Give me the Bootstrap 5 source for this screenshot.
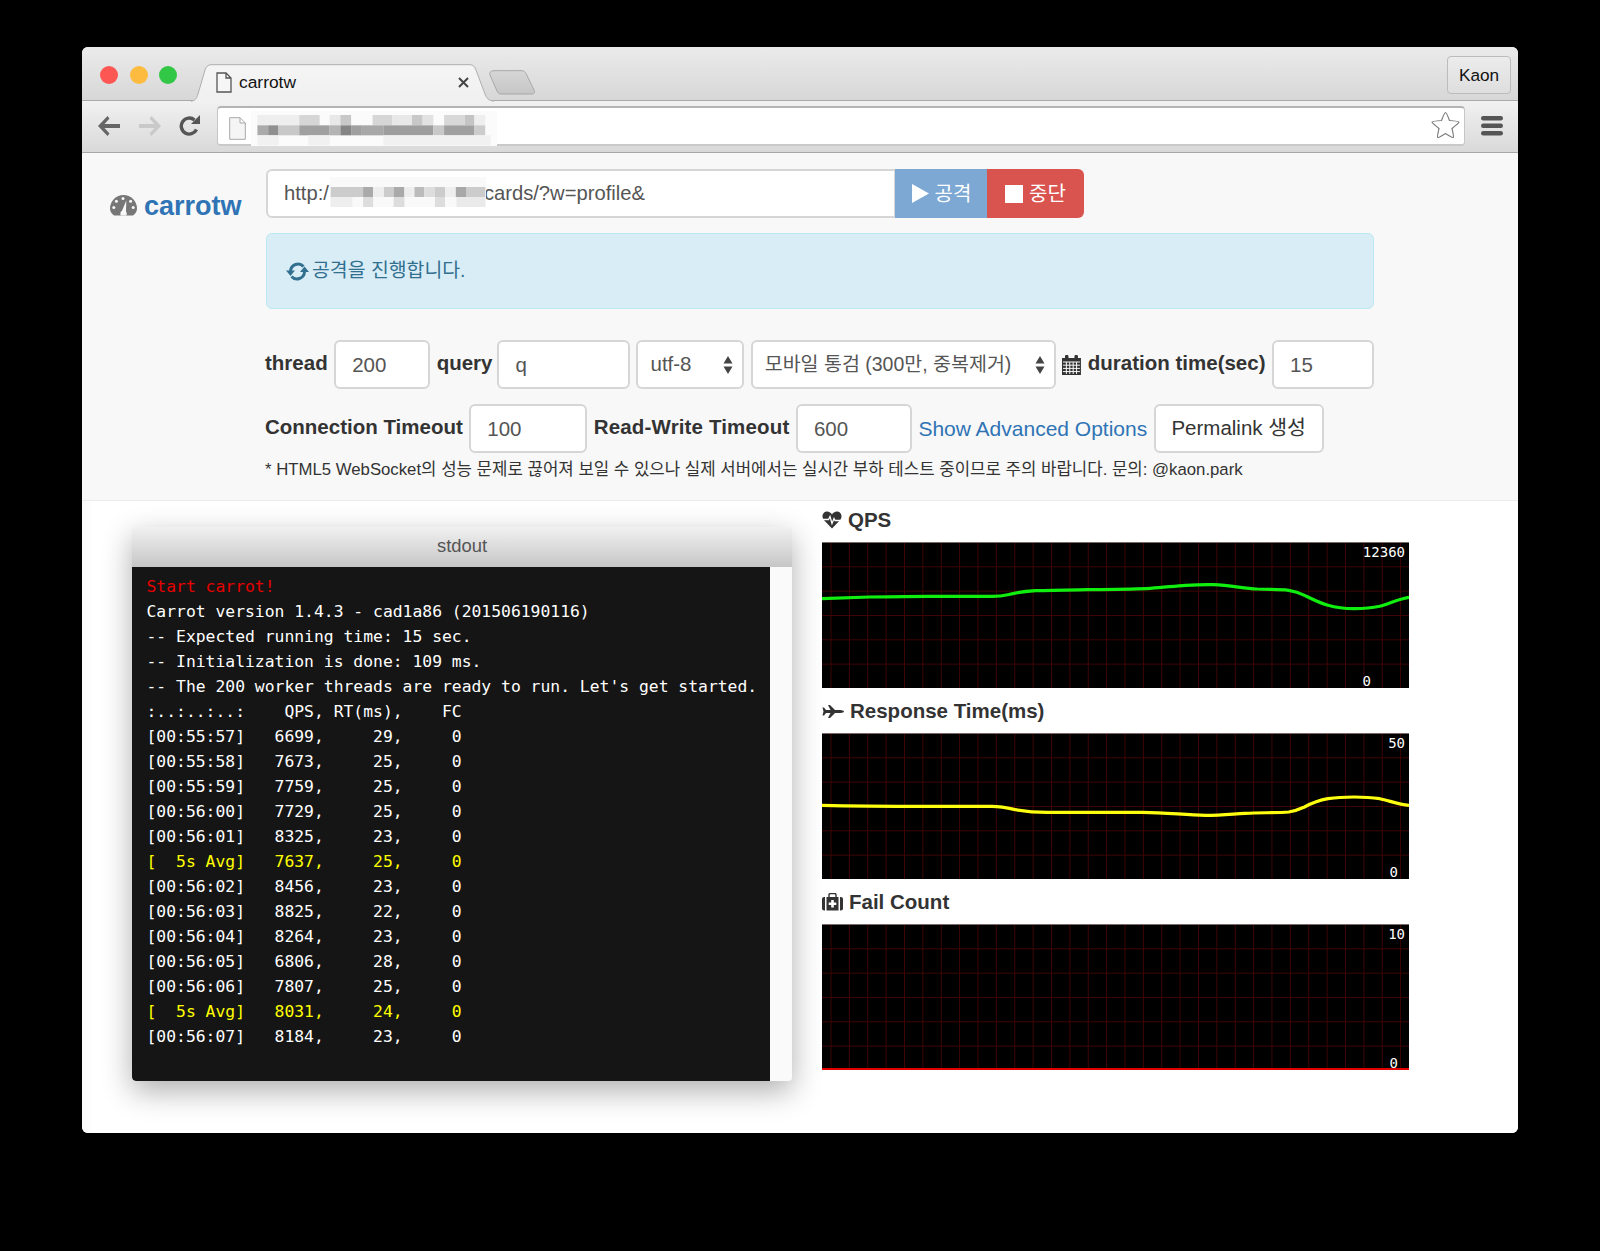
<!DOCTYPE html>
<html lang="ko">
<head>
<meta charset="utf-8">
<title>carrotw</title>
<link href="https://cdn.jsdelivr.net/npm/bootstrap@5.3.0/dist/css/bootstrap.min.css" rel="stylesheet">
<style>
html,body{height:1251px;overflow:hidden}
body{background:#000;padding:47px 0 0 82px;font-family:"Liberation Sans","Noto Sans CJK KR",sans-serif;font-size:20.5px;color:#333}
.shot{width:1436px;height:1086px;background:#fff;border-radius:6px;overflow:hidden}
.tabstrip{height:54px;background:linear-gradient(#ebebeb,#d7d7d7);border-bottom:1px solid #a8a8a8;padding-left:18px}
.dot{width:18px;height:18px;border-radius:50%;margin-top:19px}
.dot-r{background:#fc5753}.dot-y{background:#fdbc40}.dot-g{background:#33c748}
.dots{gap:11.5px}
.tabitem{width:303px;height:37px;margin:17px 0 -1px 13.5px;position:relative;font-size:17.4px;color:#111;padding:5px 0 0 25.5px}
.tabitem>.tabshape{position:absolute;left:0;top:0}
.tabitem>.inner{position:relative;gap:7px}
.tabclose{position:absolute;right:25px;top:13px}
.newtab{margin:23px 0 0 -6px}
.kaon{margin:9px 7px 0 auto;width:64px;height:38px;border:1px solid #bcbcbc;border-radius:4px;background:linear-gradient(#ececec,#dedede);font-size:17.2px;color:#111;line-height:36px;text-align:center}
.toolbar{height:52px;background:linear-gradient(#f1f1f1,#d9d9d9);border-bottom:1px solid #a6a6a6;padding:5px 15px 0 15px}
.navicons{width:120px;gap:17px;padding-top:9px}
.addr{width:1248px;height:40px;background:#fff;border:1px solid #c6c6c6;border-top:2px solid #b4b4b4;border-bottom:2px solid #c9c9c9;border-radius:4px;position:relative;margin-left:0}
.addr-file{margin:7px 0 0 11px}
.addr-blur{position:absolute;left:33px;top:3px;filter:blur(.6px)}
.addr-star{position:absolute;right:4px;top:3px}
.burger{margin:10px 0 0 16px}
.topzone{background:#f8f8f8;height:348px;border-bottom:1px solid #ececec;padding-top:16px}
.brandcol{width:184px;padding:22px 0 0 28px;gap:7px}
.brand{font-size:27px;font-weight:700;color:#2f74b5;line-height:30px;text-decoration:none}
.formcol{width:1108px}
.urlgroup{width:820px;height:49px}
.fc{font-size:20.5px;color:#555;border:2px solid #d6d6d6;border-radius:6px;background-color:#fff;height:49px;padding:0 16px;box-shadow:none}
.urlbox{width:630px;display:flex;align-items:center;position:relative;flex:none;line-height:1;font-size:20.2px}
.urlmask{width:155px;flex:none}
.urlblur{position:absolute;left:62px;top:6px;filter:blur(.6px)}
.btnact{font-size:20px;color:#fff;border:0;height:49px;display:flex;align-items:center;gap:6px;justify-content:center;padding:0}
.btnact.go{width:93px;background:#7ca8d3;border-radius:0}
.btnact.halt{width:97px;background:#d9534f;border-radius:0 6px 6px 0}
.urlgroup .fc{border-radius:6px 0 0 6px}
.notice{margin:15px 0 0;height:76px;background:#d9edf7;border:1px solid #bce8f1;border-radius:6px;color:#31708f;padding:0 19px;gap:3px;font-size:19.4px;width:1108px}
.frow{gap:6.5px;height:49px;margin-left:-1px}
.frow1{margin-top:31px}
.frow2{margin-top:15px}
.lab{font-weight:700;color:#333;white-space:nowrap;margin:0 0 2px}
.lab.wide{letter-spacing:.15px}
.fc.wa{width:96px}.fc.wb{width:132.5px;margin-left:-1.5px}.fc.wc{width:108px;padding-left:12px}.fc.wd{width:306px;padding-left:12px;font-size:19.5px}.fc.we{width:102px}
.fc.wf{width:118px}.fc.wg{width:116px}
.fc.selx{background-image:url("data:image/svg+xml,%3csvg xmlns='http://www.w3.org/2000/svg' viewBox='0 0 10 20'%3e%3cpath fill='%23444' d='M5 1l4.5 7.5h-9zM5 19l4.500-7.500h-9z'/%3e%3c/svg%3e");background-size:10px 20px;background-position:right 9px center;background-repeat:no-repeat}
.lnk{color:#2f74b5;text-decoration:none;white-space:nowrap;font-size:21px}
.permabtn{width:170px;height:49px;font-size:20.5px;color:#333;background:#fff;border:2px solid #d6d6d6;border-radius:6px;padding:0;white-space:nowrap}
.permabtn:hover{background:#fff}
.footnote{font-size:16.75px;color:#333;margin:4px 0 0 -1px;line-height:26px;white-space:nowrap}
.lowzone{height:632px;background:linear-gradient(90deg,#fafafa,#fff 12px)}
.termwrap{width:660px;height:554px;margin:26px 0 0 50px;border-radius:4px;box-shadow:0 10px 30px rgba(0,0,0,.32);background:#fafafa;overflow:hidden}
.termhead{height:40px;background:linear-gradient(#f1f1f1,#c6c6c6);text-align:center;font-size:18.4px;line-height:38px;color:#555}
.termbody{width:638px;height:514px;background:#151515;padding:6.5px 0 0 14.5px;margin:0;font-family:"DejaVu Sans Mono",monospace;font-size:16.38px;line-height:25px;color:#fff;overflow:hidden;border-radius:0 0 0 4px}
.c-red{color:#e60000}.c-yel{color:#ff0}
.chartcol{width:587px;margin:-1px 0 0 30px;gap:3px}
.chartcap{height:42px;font-weight:700;gap:6px;color:#333;padding-bottom:2px}
.scope{height:146px;position:relative;background-color:#000;background-image:linear-gradient(to right,#3f0505 1px,transparent 1px),linear-gradient(to bottom,#3f0505 1px,transparent 1px);background-size:18.38px 100%,100% 24.33px;background-position:8.5px 0,0 -1px;border-top:1px solid #7a6a6a}
.scope svg{position:absolute;left:0;top:-1px}
.scale{position:absolute;right:4px;font-family:"DejaVu Sans Mono",monospace;font-size:14px;line-height:16px;color:#fff}
.scale.top{top:1px}.scale.bot{bottom:-1px;right:11px}
.scale.bot.botq{right:38px}
.flat{position:absolute;left:0;right:0;bottom:0;height:2px;background:#e00000}
</style>
</head>
<body>
<div class="shot">
  <div class="tabstrip d-flex">
    <div class="dots d-flex"><div class="dot dot-r"></div><div class="dot dot-y"></div><div class="dot dot-g"></div></div>
    <div class="tabitem">
      <svg class="tabshape" width="303" height="38" viewBox="0 0 303 38"><defs><linearGradient id="tg" x1="0" y1="0" x2="0" y2="1"><stop offset="0" stop-color="#f5f5f5"/><stop offset="1" stop-color="#f0f0f0"/></linearGradient></defs><path d="M0 38V37C5 37 6 33 7 30L14 6C15 3 17 .7 20 .7H279C282 .7 284 3 285 6L294 30C295 33 297 37 303 37V38" fill="url(#tg)" stroke="#aeaeae"/></svg>
      <div class="inner d-flex align-items-center">
        <svg width="16" height="21" viewBox="0 0 16 21"><path d="M1 1H10L15 6V20H1Z M10 1V6H15" fill="#f6f6f6" stroke="#555" stroke-width="1.3"/></svg>
        <span>carrotw</span>
      </div>
      <svg class="tabclose" width="11" height="11" viewBox="0 0 11 11"><path d="M1 1L10 10M10 1L1 10" stroke="#444" stroke-width="2"/></svg>
    </div>
    <svg class="newtab" width="48" height="25" viewBox="0 0 48 25"><defs><linearGradient id="ng" x1="0" y1="0" x2="0" y2="1"><stop offset="0" stop-color="#d6d6d6"/><stop offset="1" stop-color="#c6c6c6"/></linearGradient></defs><path d="M6 .7H34C36 .7 37 2 38 3.500L46 20C47 22 46.500 24 44 24H13C11 24 10 23 9 21L2 5C1 3 2.500 .7 6 .7Z" fill="url(#ng)" stroke="#a8a8a8"/></svg>
    <div class="kaon">Kaon</div>
  </div>
  <div class="toolbar d-flex">
    <div class="navicons d-flex">
      <svg width="24" height="22" viewBox="0 0 24 22"><path d="M10.500 1L1 11L10.500 21L12.500 18.500L7.500 13H23V9H7.500L12.500 3.500Z" fill="#666"/></svg>
      <svg width="24" height="22" viewBox="0 0 24 22"><path d="M13.500 1L23 11L13.500 21L11.500 18.500L16.500 13H1V9H16.500L11.500 3.500Z" fill="#c9c9c9"/></svg>
      <svg width="22" height="21" viewBox="0 0 22 21"><path d="M17.500 14.500A8 8 0 1 1 15.500 5" fill="none" stroke="#555" stroke-width="3.400"/><path d="M12 9H21V0Z" fill="#555"/></svg>
    </div>
    <div class="addr">
      <svg class="addr-file" width="17" height="23" viewBox="0 0 17 23"><path d="M.7.7H11L16.300 6V22.300H.7Z M11 .7V6H16.300" fill="#f5f5f5" stroke="#a8a8a8"/></svg>
      <svg class="addr-blur" width="246" height="35" viewBox="480 210 688 105" preserveAspectRatio="none"><rect x="480" y="210" width="688" height="105" fill="#fbfbfb"/><g><rect x="498" y="222" width="117" height="31" fill="#eee"/><rect x="615" y="222" width="57" height="31" fill="#d6d6d6"/><rect x="700" y="222" width="30" height="31" fill="#e8e8e8"/><rect x="730" y="222" width="30" height="31" fill="#c8c8c8"/><rect x="820" y="222" width="55" height="31" fill="#d6d6d6"/><rect x="875" y="222" width="55" height="31" fill="#e8e8e8"/><rect x="930" y="222" width="30" height="31" fill="#c8c8c8"/><rect x="960" y="222" width="30" height="31" fill="#e2e2e2"/><rect x="1020" y="222" width="58" height="31" fill="#d8d8d8"/><rect x="1078" y="222" width="27" height="31" fill="#c4c4c4"/><rect x="1105" y="222" width="30" height="31" fill="#eee"/></g><g><rect x="498" y="253" width="30" height="30" fill="#aaa"/><rect x="528" y="253" width="29" height="30" fill="#8f8f8f"/><rect x="557" y="253" width="58" height="30" fill="#c8c8c8"/><rect x="615" y="253" width="85" height="30" fill="#a0a0a0"/><rect x="700" y="253" width="30" height="30" fill="#b4b4b4"/><rect x="730" y="253" width="30" height="30" fill="#858585"/><rect x="760" y="253" width="30" height="30" fill="#a0a0a0"/><rect x="790" y="253" width="60" height="30" fill="#a8a8a8"/><rect x="850" y="253" width="140" height="30" fill="#9e9e9e"/><rect x="990" y="253" width="30" height="30" fill="#c8c8c8"/><rect x="1020" y="253" width="85" height="30" fill="#a0a0a0"/><rect x="1105" y="253" width="30" height="30" fill="#ccc"/></g><g fill="#f1f1f1"><rect x="498" y="283" width="60" height="30"/><rect x="640" y="283" width="60" height="30"/><rect x="850" y="283" width="300" height="30"/></g></svg>
      <svg class="addr-star" width="29" height="28" viewBox="0 0 29 28"><path d="M14.500 1.500C15.500 1.500 16 3 18.500 9.500C25 10 28 10.300 28 11.200C28 12 24 14.800 21 17.500C22 22 23 26 22.300 26.500C21.500 27 18 24.500 14.500 22.500C11 24.500 7.500 27 6.700 26.500C6 26 7 22 8 17.500C5 14.800 1 12 1 11.200C1 10.300 4 10 10.500 9.500C13 3 13.500 1.500 14.500 1.500Z" fill="#fff" stroke="#7d7d7d" stroke-width="1.200"/></svg>
    </div>
    <svg class="burger" width="22" height="20" viewBox="0 0 22 20"><g fill="#555"><rect width="22" height="4.500" rx="2.200"/><rect y="7.500" width="22" height="4.500" rx="2.200"/><rect y="15" width="22" height="4.500" rx="2.200"/></g></svg>
  </div>
  <div class="topzone d-flex">
    <div class="brandcol d-flex align-items-start">
      <svg width="27" height="21" viewBox="0 0 27 21" class="mt-1"><path d="M4 20.500C1.500 18.500 0 16.500 0 13.500A13.500 13.500 0 0 1 27 13.500C27 16.500 25.500 18.500 23 20.500Z" fill="#777"/><g fill="#f8f8f8"><circle cx="13" cy="3.400" r="1.500"/><circle cx="6.400" cy="6.300" r="1.500"/><circle cx="20.600" cy="6.300" r="1.500"/><circle cx="3.800" cy="12.500" r="1.500"/><circle cx="23.200" cy="12.500" r="1.500"/><path d="M16.300 5.500L16 16.500C17 18 17 19.500 16.300 20.500H10.700C10 18.500 10.500 16.500 12 15.800Z"/></g></svg>
      <a class="brand" href="#">carrotw</a>
    </div>
    <div class="formcol">
      <div class="input-group urlgroup flex-nowrap">
        <div class="fc urlbox"><span>http:/</span><span class="urlmask"></span><span>cards/?w=profile&amp;</span>
          <svg class="urlblur" width="156" height="30" viewBox="698 410 434 90" preserveAspectRatio="none"><rect x="698" y="410" width="434" height="90" fill="#f9f9f9"/><g><rect x="700" y="440" width="90" height="30" fill="#ccc"/><rect x="790" y="440" width="28" height="30" fill="#aaa"/><rect x="818" y="440" width="30" height="30" fill="#eee"/><rect x="848" y="440" width="27" height="30" fill="#ccc"/><rect x="875" y="440" width="30" height="30" fill="#aaa"/><rect x="905" y="440" width="28" height="30" fill="#eee"/><rect x="933" y="440" width="27" height="30" fill="#bbb"/><rect x="960" y="440" width="30" height="30" fill="#ddd"/><rect x="990" y="440" width="28" height="30" fill="#ccc"/><rect x="1018" y="440" width="30" height="30" fill="#eee"/><rect x="1048" y="440" width="30" height="30" fill="#a8a8a8"/><rect x="1078" y="440" width="52" height="30" fill="#ccc"/></g><g fill="#ddd"><rect x="790" y="470" width="28" height="30"/><rect x="875" y="470" width="30" height="30"/><rect x="990" y="470" width="28" height="30"/><rect x="700" y="470" width="60" height="30" fill="#eee"/><rect x="1050" y="470" width="80" height="30" fill="#eaeaea"/></g></svg>
        </div>
        <button type="button" class="btn btnact go"><svg width="17" height="19" viewBox="0 0 17 19"><path d="M0 0L17 9.500L0 19Z" fill="#fff"/></svg>공격</button>
        <button type="button" class="btn btnact halt"><svg width="18" height="18" viewBox="0 0 18 18"><rect width="18" height="18" fill="#fff"/></svg>중단</button>
      </div>
      <div class="alert notice d-flex align-items-center" role="alert">
        <svg width="23" height="19" viewBox="0 0 23 19"><g fill="none" stroke="#31708f" stroke-width="3"><path d="M4.500 9A7.500 7.500 0 0 1 17.500 4.500"/><path d="M18.500 10A7.500 7.500 0 0 1 5.500 14.500"/></g><g fill="#31708f"><path d="M0 8.500H9L4.500 14Z"/><path d="M14 10H23L18.500 4.500Z"/></g></svg>
        <span>공격을 진행합니다.</span>
      </div>
      <div class="frow frow1 d-flex align-items-center">
        <label class="lab">thread</label>
        <input class="form-control fc wa" value="200">
        <label class="lab">query</label>
        <input class="form-control fc wb" value="q">
        <select class="form-select fc wc selx"><option>utf-8</option></select>
        <select class="form-select fc wd selx"><option>모바일 통검 (300만, 중복제거)</option></select>
        <svg width="19" height="20" viewBox="0 0 19 20"><path d="M0 3H3V1.500A1.500 1.500 0 0 1 6.500 1.500V3H12.500V1.500A1.500 1.500 0 0 1 16 1.500V3H19V20H0Z" fill="#333"/><g stroke="#f8f8f8" stroke-width="1"><path d="M1 7H18M1 10.200H18M1 13.400H18M1 16.600H18M4.400 7V19M7.800 7V19M11.200 7V19M14.600 7V19"/></g></svg>
        <label class="lab">duration time(sec)</label>
        <input class="form-control fc we" value="15">
      </div>
      <div class="frow frow2 d-flex align-items-center">
        <label class="lab">Connection Timeout</label>
        <input class="form-control fc wf" value="100">
        <label class="lab wide">Read-Write Timeout</label>
        <input class="form-control fc wg" value="600">
        <a class="lnk" href="#">Show Advanced Options</a>
        <button type="button" class="btn permabtn">Permalink 생성</button>
      </div>
      <p class="footnote">* HTML5 WebSocket의 성능 문제로 끊어져 보일 수 있으나 실제 서버에서는 실시간 부하 테스트 중이므로 주의 바랍니다. 문의: @kaon.park</p>
    </div>
  </div>
  <div class="lowzone d-flex align-items-start">
    <div class="termwrap">
      <div class="termhead">stdout</div>
<pre class="termbody"><span class="c-red">Start carrot!</span>
Carrot version 1.4.3 - cad1a86 (201506190116)
-- Expected running time: 15 sec.
-- Initialization is done: 109 ms.
-- The 200 worker threads are ready to run. Let's get started.
:..:..:..:    QPS, RT(ms),    FC
[00:55:57]   6699,     29,     0
[00:55:58]   7673,     25,     0
[00:55:59]   7759,     25,     0
[00:56:00]   7729,     25,     0
[00:56:01]   8325,     23,     0
<span class="c-yel">[  5s Avg]   7637,     25,     0</span>
[00:56:02]   8456,     23,     0
[00:56:03]   8825,     22,     0
[00:56:04]   8264,     23,     0
[00:56:05]   6806,     28,     0
[00:56:06]   7807,     25,     0
<span class="c-yel">[  5s Avg]   8031,     24,     0</span>
[00:56:07]   8184,     23,     0</pre>
    </div>
    <div class="chartcol d-flex flex-column">
      <section>
        <div class="chartcap d-flex align-items-center">
          <svg width="20" height="18" viewBox="0 0 20 18"><path d="M10 17.500L1.800 9C-1 5.500 1 .6 5 .6C7.300 .6 9 2 10 3.500C11 2 12.700 .6 15 .6C19 .6 21 5.500 18.200 9Z" fill="#333"/><path d="M0 8.500H6.500L8 5.500L10 12.500L12 7.500L13 9.500H20" fill="none" stroke="#fff" stroke-width="1.300"/></svg>
          <span>QPS</span>
        </div>
        <div class="scope">
          <svg width="587" height="146" viewBox="0 0 587 146"><path d="M0 56.700C20 56 35 55.400 47.400 55C70 54.600 90 54.300 106.800 54.300H169.900C178 54.300 182 53.600 185.800 52.700C195 50.500 205 49.200 213.500 48.700C230 48 248 47.900 265 47.700C285 47.400 310 47.300 328.400 46.300C342 45.500 352 44 363.900 43.300C375 42.700 385 42.600 391.600 42.700C408 43.500 420 45.900 435 47C448 47.600 458 47.300 466.700 48.300C473 49.200 478 51 482.500 53.300C490 57 497 60.700 506 63.300C515 66 523 66.700 532 66.700C541 66.700 550 66 557.700 64.300C567 61.800 576 57 587 55.300" fill="none" stroke="#10ee10" stroke-width="3.200"/></svg>
          <span class="scale top">12360</span><span class="scale bot botq">0</span>
        </div>
      </section>
      <section>
        <div class="chartcap d-flex align-items-center">
          <svg width="22" height="13" viewBox="0 0 22 13"><path d="M22 6.500C22 5.500 19 5 17 5H13L8 0H6L8.500 5H4L2 2.500H.5L1.500 6.500L.5 10.500H2L4 8H8.500L6 13H8L13 8H17C19 8 22 7.500 22 6.500Z" fill="#333"/></svg>
          <span>Response Time(ms)</span>
        </div>
        <div class="scope">
          <svg width="587" height="146" viewBox="0 0 587 146"><path d="M0 72.300C40 73.300 80 73.300 106.800 73.300H169.900C180 73.500 186 75 193.600 76.700C205 78.600 214 79.300 225.300 79.300H320.200C345 79.300 362 82 383.500 82.300C400 82.300 410 81 423 80.300C440 79.500 455 80 466.700 79C473 78 477 76.500 482.500 74C490 70 497 67.300 506 65.700C515 64.300 523 64 532 64C541 64 550 64.500 557.700 65.700C567 67.500 576 71.500 587 72.300" fill="none" stroke="#ffff10" stroke-width="3.200"/></svg>
          <span class="scale top">50</span><span class="scale bot">0</span>
        </div>
      </section>
      <section>
        <div class="chartcap d-flex align-items-center">
          <svg width="21" height="18" viewBox="0 0 21 18"><path d="M7 4V1.800C7 1 7.600 .5 8.400 .5H12.600C13.400 .5 14 1 14 1.800V4" fill="none" stroke="#333" stroke-width="1.400"/><path d="M4.500 4H16.500V17.500H4.500Z" fill="#333"/><path d="M0 6C0 4.800 1 4 2 4H3V17.500H2C1 17.500 0 16.700 0 15.500Z M18 4H19C20 4 21 4.800 21 6V15.500C21 16.700 20 17.500 19 17.500H18Z" fill="#333"/><path d="M9.200 7H11.800V9.500H14.300V12.100H11.800V14.600H9.200V12.100H6.700V9.500H9.200Z" fill="#fff"/></svg>
          <span>Fail Count</span>
        </div>
        <div class="scope">
          <div class="flat"></div>
          <span class="scale top">10</span><span class="scale bot">0</span>
        </div>
      </section>
    </div>
  </div>
</div>
</body>
</html>
